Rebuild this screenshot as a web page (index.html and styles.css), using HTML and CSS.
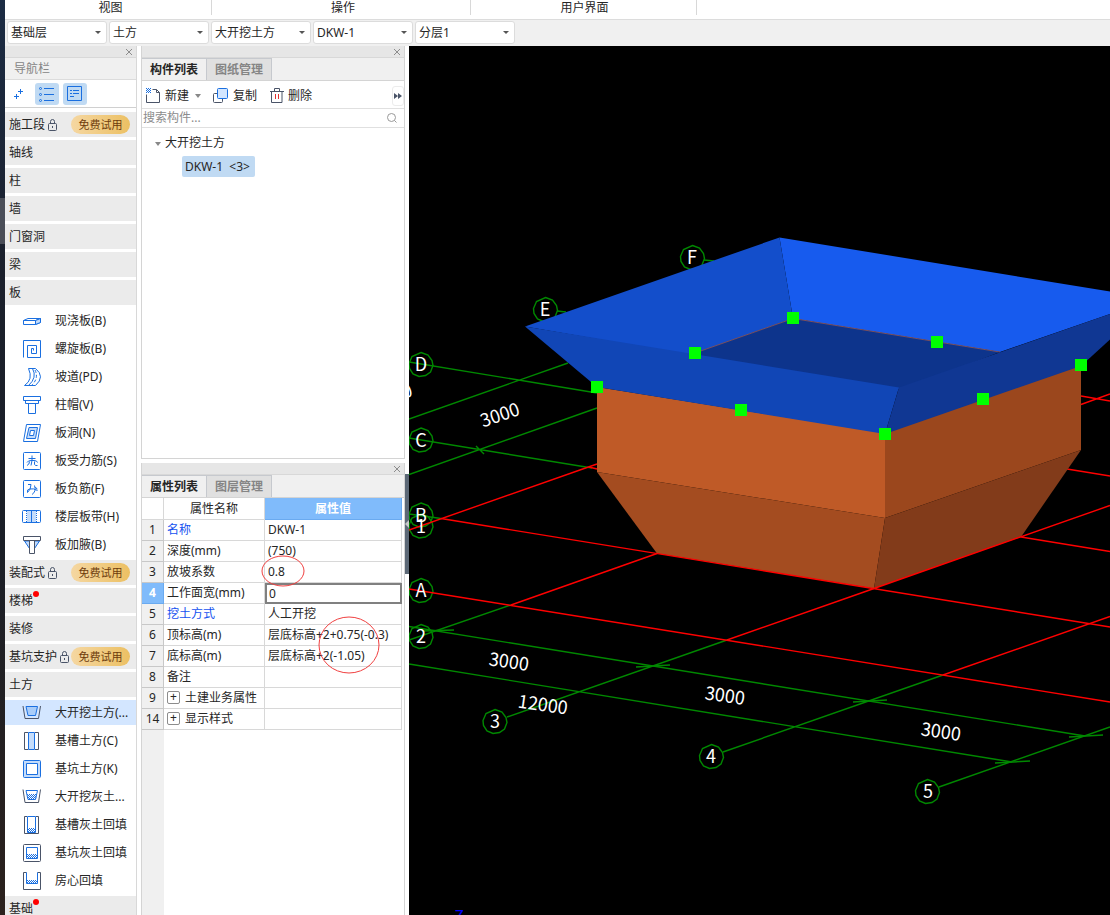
FILE: index.html
```html
<!DOCTYPE html>
<html lang="zh-CN">
<head>
<meta charset="utf-8">
<title>土方建模</title>
<link rel="stylesheet" href="styles.css">
</head>
<body>
<svg class="defs" aria-hidden="true">
  <defs>
    <symbol id="lock" viewBox="0 0 12 14"><rect x="1.500" y="5.500" width="8" height="7" rx="1"/><path d="M3.500 5V3.500a2 2 0 0 1 4 0V5M5.500 8v2"/></symbol>
    <symbol id="close" viewBox="0 0 8 8"><path d="M1 1l6 6M7 1L1 7"/></symbol>
    <pattern id="dots" width="2" height="2" patternUnits="userSpaceOnUse"><path d="M0 0h1v1H0zM1 1h1v1H1z" fill="#1a6fe0" stroke="none"/></pattern>
    <path id="bubble" d="M0-12L7-9.500 11-4 12 1 9.500 7.500 4.500 11-2 12-8 9.500-11.500 4-12-1-9-8z"/>
  </defs>
</svg>
<div class="app">
  <div class="desktop-edge"><span></span></div>
  <div class="window">
    <header class="ribbon">
      <span class="ribbon-view">视图</span><span class="ribbon-operate">操作</span><span class="ribbon-ui">用户界面</span>
    </header>
    <div class="selectors">
      <label class="picker"><select aria-label="楼层"><option>基础层</option></select></label>
      <label class="picker"><select aria-label="类别"><option>土方</option></select></label>
      <label class="picker"><select aria-label="类型"><option>大开挖土方</option></select></label>
      <label class="picker"><select aria-label="构件"><option>DKW-1</option></select></label>
      <label class="picker"><select aria-label="分层"><option>分层1</option></select></label>
    </div>
    <div class="workspace">
      <nav class="navigator">
        <div class="titlebar"><button aria-label="关闭导航栏"><svg class="close"><use href="#close"/></svg></button></div>
        <h2>导航栏</h2>
        <div class="nav-tools">
          <button aria-label="添加"><svg class="blue" viewBox="0 0 24 22"><path d="M13.500 6v5M11 8.500h5M9.500 11v5M7 13.500h5"/></svg></button>
          <button class="on" aria-label="列表"><svg class="blue" viewBox="0 0 24 22"><path d="M9 5.500h10M9 11.500h10M9 17.500h10"/><circle cx="5.500" cy="5.500" r="1"/><circle cx="5.500" cy="11.500" r="1"/><circle cx="5.500" cy="17.500" r="1"/></svg></button>
          <button class="on" aria-label="详情"><svg class="blue" viewBox="0 0 24 22"><path d="M4.500 3.500h14v14h-14zM7 7.500h2M10 7.500h6M7 10.500h2M10 10.500h6M7 13.500h4"/></svg></button>
        </div>
        <ul class="nav-list">
          <li class="group">施工段<svg class="lock"><use href="#lock"/></svg><button class="trial">免费试用</button></li>
          <li class="group">轴线</li>
          <li class="group">柱</li>
          <li class="group">墙</li>
          <li class="group">门窗洞</li>
          <li class="group">梁</li>
          <li class="group">板</li>
          <li class="item"><svg class="blue" viewBox="0 0 20 20"><path d="M1.500 9.500L6 7.500h12.500L13.500 9.500zM1.500 9.500v4h12v-4M13.500 13.500l5-2v-4"/><path fill="#c4dcfb" d="M13.500 9.500v4l5-2v-4z"/></svg>现浇板(B)</li>
          <li class="item"><svg class="blue" viewBox="0 0 20 20"><path d="M1.500 18.500v-17h17v17h-13v-12h9v8h-5v-5h2v2"/></svg>螺旋板(B)</li>
          <li class="item"><svg class="blue" viewBox="0 0 20 20"><path fill="#fff" d="M6.500 1.500h7q10 8 0 17H2.500q9-6 4-17z"/><path d="M10.500 1.500q5 9-4 17"/><path stroke-dasharray="3 2" d="M13 3q4 8-3 15"/></svg>坡道(PD)</li>
          <li class="item"><svg class="blue" viewBox="0 0 20 20"><path d="M1.500 1.500h17v4h-17zM3.500 5.500h13v3h-13zM6.500 8.500h7v10h-7z"/></svg>柱帽(V)</li>
          <li class="item"><svg class="blue" viewBox="0 0 20 20"><path d="M4.500 1.500h14l-3 17h-14z"/><path fill="#c4dcfb" d="M7 4.500h8.500l-2 11H4.500z"/><path fill="#fff" d="M8.500 7.500h4l-1 5h-4z"/></svg>板洞(N)</li>
          <li class="item"><svg class="blue" viewBox="0 0 20 20"><rect x="1.500" y="1.500" width="17" height="17" rx="1"/><path d="M6.500 7.500h7M10 4.500v5l-1 5M5 11.500q1-2 4-2h3q3 0 3.500 2M7.500 10.500q0 3-2.500 4M12.500 10.500v3q1 1.500 3 1"/></svg>板受力筋(S)</li>
          <li class="item"><svg class="blue" viewBox="0 0 20 20"><rect x="1.500" y="1.500" width="17" height="17" rx="1"/><path d="M6 5.500h3q0 5-3.500 8-1-3 2-3.500 4-1 8 1.500M12.500 6.500q2 6-2.500 9M13 8.500q2 0 2 2"/></svg>板负筋(F)</li>
          <li class="item"><svg class="blue" viewBox="0 0 20 20"><rect x=".5" y="3.500" width="18" height="12" rx="1"/><path fill="#c4dcfb" stroke="none" d="M5 4h9v11H5z"/><path d="M9.500 3.500v12"/><path stroke-dasharray="1 1" d="M4.500 4v12M14.500 4v12"/></svg>楼层板带(H)</li>
          <li class="item"><svg class="blue" viewBox="0 0 20 20"><path fill="#c4dcfb" d="M2.500 6h5v7.500zM17.500 6h-5v7.500z"/><path class="slate" fill="#fff" d="M1.500 1.500h17v4h-17zM7.500 5.500h5v13h-5z"/></svg>板加腋(B)</li>
          <li class="group">装配式<svg class="lock"><use href="#lock"/></svg><button class="trial">免费试用</button></li>
          <li class="group"><span class="dotted">楼梯</span></li>
          <li class="group">装修</li>
          <li class="group">基坑支护<svg class="lock"><use href="#lock"/></svg><button class="trial">免费试用</button></li>
          <li class="group">土方</li>
          <li class="item selected"><svg class="blue" viewBox="0 0 20 20"><path class="slate" d="M1 3l2 12.500h13.500L18.500 3"/><path fill="#a9cdf9" d="M4 3.500h11.500l-2 9H6z"/></svg>大开挖土方(...</li>
          <li class="item"><svg class="blue" viewBox="0 0 20 20"><path class="slate" d="M6 1.500H2.500v17H6M13 1.500h3.500v17H13"/><path fill="#c4dcfb" d="M6.500 1.500h6v17h-6z"/></svg>基槽土方(C)</li>
          <li class="item"><svg class="blue" viewBox="0 0 20 20"><rect x="1.500" y="1.500" width="17" height="17" rx="1" fill="#c4dcfb"/><path fill="#fff" d="M4.500 4.500h11v11h-11z"/></svg>基坑土方(K)</li>
          <li class="item"><svg class="blue" viewBox="0 0 20 20"><path class="slate" d="M1 2.500l2 13h13.500l2-13"/><path d="M4 3.500h11.500l-2 9H6z"/><path class="dots" d="M5 7h10l-1 5H6z"/></svg>大开挖灰土...</li>
          <li class="item"><svg class="blue" viewBox="0 0 20 20"><path class="slate" d="M5 1.500H2.500v17h14v-17H14"/><path d="M5.500 1.500v16h8v-16z"/><path class="dots" d="M6 13h7v4H6z"/></svg>基槽灰土回填</li>
          <li class="item"><svg class="blue" viewBox="0 0 20 20"><rect class="slate" x="1.500" y="1.500" width="17" height="17" rx="1"/><path d="M4.500 4.500h11v11h-11z"/><path class="dots" d="M5 11h10v4H5z"/></svg>基坑灰土回填</li>
          <li class="item"><svg class="blue" viewBox="0 0 20 20"><path class="slate" d="M4.500 1.500h-3v17h17v-17h-3"/><path d="M4.500 1.500v11h11v-11"/><path class="dots" d="M5 9h10v3H5z"/></svg>房心回填</li>
          <li class="group"><span class="dotted">基础</span></li>
        </ul>
      </nav>
      <div class="side">
        <section class="panel components">
          <div class="titlebar"><button aria-label="关闭构件列表"><svg class="close"><use href="#close"/></svg></button></div>
          <div class="tabs"><button class="active">构件列表</button><button>图纸管理</button></div>
          <div class="toolbar">
            <button class="new"><svg viewBox="0 0 18 18"><path d="M7.500 2.500h4l3 3v10h-13V7.500M11.500 2.500v3h3"/><path class="dots" d="M1 1h5v5H1z"/></svg>新建<i class="caret"></i></button>
            <button class="copy"><svg viewBox="0 0 18 18"><rect x="1.500" y="6.500" width="9" height="9" rx="1"/><rect x="5.500" y="1.500" width="10" height="10" rx="1" fill="#d3e6ff" stroke="#1a6fe0"/></svg>复制</button>
            <button><svg viewBox="0 0 18 18"><path d="M2 4.500h14M6.500 4V1.500h5V4M3.500 4.500v11h10.500v-11"/><path d="M7.500 7v5M10.500 7v5" stroke="#e03030"/></svg>删除</button>
            <button class="more" aria-label="更多"><svg viewBox="0 0 8 6"><path d="M0 0l4 3-4 3zM4 0l4 3-4 3z"/></svg></button>
          </div>
          <label class="search"><input type="text" aria-label="搜索构件" placeholder="搜索构件..."><svg viewBox="0 0 12 12"><circle cx="5.500" cy="5.500" r="4"/><path d="M8.500 8.500l2 2"/></svg></label>
          <ul class="tree"><li><i class="caret"></i>大开挖土方<ul><li><span>DKW-1&nbsp; &lt;3&gt;</span></li></ul></li></ul>
        </section>
        <section class="panel properties">
          <div class="titlebar"><button aria-label="关闭属性列表"><svg class="close"><use href="#close"/></svg></button></div>
          <div class="tabs"><button class="active">属性列表</button><button>图层管理</button></div>
          <div class="sheet">
            <table>
              <colgroup><col class="c-num"><col class="c-name"><col></colgroup>
              <thead><tr><th></th><th>属性名称</th><th class="current">属性值</th></tr></thead>
              <tbody>
                <tr><th>1</th><td class="key">名称</td><td>DKW-1</td></tr>
                <tr><th>2</th><td>深度(mm)</td><td>(750)</td></tr>
                <tr><th>3</th><td>放坡系数</td><td>0.8</td></tr>
                <tr><th class="current">4</th><td>工作面宽(mm)</td><td class="edit"><input type="text" aria-label="工作面宽(mm)" value="0"></td></tr>
                <tr><th>5</th><td class="key">挖土方式</td><td>人工开挖</td></tr>
                <tr><th>6</th><td>顶标高(m)</td><td>层底标高+2+0.75(-0.3)</td></tr>
                <tr><th>7</th><td>底标高(m)</td><td>层底标高+2(-1.05)</td></tr>
                <tr><th>8</th><td>备注</td><td></td></tr>
                <tr><th>9</th><td><button class="expand" aria-label="展开土建业务属性">+</button>土建业务属性</td><td></td></tr>
                <tr><th>14</th><td><button class="expand" aria-label="展开显示样式">+</button>显示样式</td><td></td></tr>
              </tbody>
            </table>
            <svg class="marks" viewBox="0 0 262 232"><ellipse cx="141" cy="73" rx="21" ry="15"/><ellipse cx="207" cy="147" rx="30" ry="28"/></svg>
          </div>
        </section>
      </div>
      <div class="splitter"><button aria-label="收起面板"><svg viewBox="0 0 4 8"><path d="M4 0v8L0 4z"/></svg></button></div>
      <main class="canvas">
        <svg viewBox="409 46 701 869" preserveAspectRatio="xMinYMin slice">
          <g class="axis">
            <path d="M409 362L597 393M409 438L592 468M409 419L568 363M409 474.500L597 408M476 446l8 8M409 514L441 518.500M704 260l10 1M557 311l9 1"/>
            <path d="M409 640L511 605M507 717L727 640M723 752L943 675M939 787L1110 727M409 626.500L1085 736M409 664L1012 762"/>
            <path d="M422 631L454 630M636 667L670 665M853 702L887 700M1069 737L1103 735M995 763L1030 761"/>
            <use href="#bubble" x="692.500" y="257.500"/><use href="#bubble" x="545.500" y="309.500"/><use href="#bubble" x="421" y="364.500"/><use href="#bubble" x="421" y="440"/><use href="#bubble" x="421" y="515"/><use href="#bubble" x="421" y="526"/><use href="#bubble" x="421" y="590.500"/><use href="#bubble" x="421" y="636.500"/><use href="#bubble" x="495" y="721.500"/><use href="#bubble" x="711.500" y="756.500"/><use href="#bubble" x="927.500" y="791.500"/>
          </g>
          <path class="grid" d="M409 530L597 464M589 467l8 2M409 589L1110 702M511 605L657 553.500M727 640L874 588.500M943 675L1110 616.500M1081 396L1110 401M1081 404.500L1110 394M1067 469L1110 476"/>
          <g class="labels">
            <text x="692" y="264">F</text><text x="545" y="316">E</text><text x="421" y="371">D</text><text x="421" y="447">C</text><text x="421" y="522">B</text><text x="421" y="533">1</text><text x="421" y="597">A</text><text x="421" y="643">2</text><text x="495" y="728">3</text><text x="711" y="763">4</text><text x="928" y="798">5</text>
            <text transform="translate(502 421) rotate(-19)">3000</text><text transform="translate(409 397) rotate(-19)">0</text>
            <text transform="translate(508 668) rotate(8)">3000</text><text transform="translate(542 711) rotate(8)">12000</text><text transform="translate(724 702) rotate(8)">3000</text><text transform="translate(940 738) rotate(8)">3000</text>
            <text class="z" x="459" y="922">Z</text>
          </g>
          <g class="pit">
            <path fill="#bf5a27" d="M597 387L885 433V518L597 472z"/>
            <path fill="#a44c20" d="M597 472L885 518 874 588.500 657 553.500z"/>
            <path fill="#9b471d" d="M885 433L1081 365V450L885 518z"/>
            <path fill="#823b1a" d="M885 518L1081 450 1021 537 874 588.500z"/>
            <path fill="#175bee" d="M779.500 237.500L1110 291.500V314L1000 352 793 318.500z"/>
            <path fill="#134ecb" d="M525 326.500L779.500 237.500 793 318.500 695 353.500V356z"/>
            <path fill="#0d348c" d="M695 353L793 318.500 1000 352 902 390 695 357z"/>
            <path fill="#1146b6" d="M525 326.500L899 387.500 885 434 597 387z"/>
            <path fill="#103793" d="M899 387.500L1110 314V339.500L1081 366 885 434z"/>
            <path class="rim" d="M695 353L793 318.500 1000 352"/>
          </g>
          <path class="grid" d="M441 518.500L1110 627M874 588.500L1110 505.500M1021 537L1110 551.500"/>
          <path class="grips" d="M787 312h12v12h-12zM689 347h12v12h-12zM931 336h12v12h-12zM591 381h12v12h-12zM735 404h12v12h-12zM879 428h12v12h-12zM977 393h12v12h-12zM1075 359h12v12h-12z"/>
        </svg>
      </main>
    </div>
  </div>
</div>
</body>
</html>
```
FILE: styles.css
```css
* { box-sizing: border-box; }
body {
  margin: 0;
  font: 12px/20px "Noto Sans", "Noto Sans CJK SC", sans-serif;
  color: #262626;
}
button, input, select { font: inherit; color: inherit; border: 0; padding: 0; margin: 0; background: none; }
ul { list-style: none; margin: 0; padding: 0; }
svg { fill: none; stroke: #4a5468; flex: none; }
.defs { position: absolute; width: 0; height: 0; }
.dots { fill: url(#dots); stroke: none; }
.blue { stroke: #1a6fe0; }
.slate { stroke: #4a5468; }

.app { display: flex; height: 100vh; overflow: hidden; background: #fff; }
.desktop-edge { width: 5px; flex: none; padding-top: 198px; background: linear-gradient(#1c2c44, #1b202c 30%, #1b1f27 60%, #2b211d); }
.desktop-edge span { display: block; height: 46px; background: #4a4e58; }
.window { flex: 1; min-width: 0; display: flex; flex-direction: column; }

.ribbon { display: flex; height: 20px; flex: none; border-bottom: 1px solid #dcdcdc; line-height: 16px; text-align: center; }
.ribbon span { height: 15px; border-right: 1px solid #d8d8d8; }
.ribbon-view { width: 207px; padding-left: 5px; }
.ribbon-operate { width: 259px; padding-left: 4px; }
.ribbon-ui { width: 226px; padding-left: 2px; }

.selectors { display: flex; flex: none; gap: 2px; height: 26px; padding: 1px 2px; background: #f0f0f0; }
.picker { position: relative; width: 100px; height: 23px; }
.picker select { appearance: none; width: 100%; height: 100%; padding: 0 16px 0 3px; border: 1px solid #dcdcdc; border-radius: 3px; background: #fff; }
.picker::after, .caret { content: ""; border: 3px solid transparent; border-top-color: #555; border-bottom: 0; }
.picker::after { position: absolute; right: 6px; top: 10px; pointer-events: none; }
.caret { display: inline-block; border-top: 4px solid #888; }

.workspace { flex: 1; min-height: 0; display: flex; }
.titlebar { height: 12px; flex: none; display: flex; justify-content: flex-end; align-items: center; padding-right: 3px; background: #e6e6e6; border-bottom: 1px solid #d8d8d8; }
.titlebar button { display: flex; }
.close { width: 8px; height: 8px; stroke: #8c8c8c; }

.navigator { width: 132px; flex: none; border-right: 1px solid #d8d8d8; overflow: hidden; }
.navigator h2 { margin: 0; height: 22px; padding-left: 9px; font-size: 12px; font-weight: 400; line-height: 22px; color: #858585; background: #f0f0f0; border-bottom: 1px solid #dcdcdc; }
.nav-tools { display: flex; gap: 4px; height: 28px; padding: 3px 2px; border-bottom: 1px solid #d0d0d0; }
.nav-tools button { width: 24px; height: 22px; border-radius: 3px; }
.nav-tools svg { width: 24px; height: 22px; display: block; }
.nav-tools .on { background: #c0daf3; }
.nav-list { display: grid; gap: 3px; padding-top: 4px; }
.nav-list li { height: 25px; display: flex; align-items: center; white-space: nowrap; }
.group { background: #ebebeb; padding: 0 6px 0 4px; }
.item { gap: 13px; padding-left: 17px; }
.item svg { width: 20px; height: 20px; }
.selected { background: #d3e6ff; }
.lock { width: 12px; height: 14px; margin-left: 2px; }
.trial { margin-left: auto; width: 59px; height: 19px; border-radius: 10px; font-size: 11px; line-height: 19px; color: #6e3c0c; background: linear-gradient(90deg, #f5d7a2, #ecc063); text-align: center; }
.dotted { position: relative; }
.dotted::after { content: ""; position: absolute; right: -6px; top: 0; width: 6px; height: 6px; border-radius: 50%; background: #f00; }

.side { width: 264px; margin-left: 4px; flex: none; display: flex; flex-direction: column; gap: 4px; }
.panel { border: 1px solid #d4d4d4; border-top: 0; background: #fff; overflow: hidden; }
.components { flex: 0 0 413px; }
.properties { flex: 1; min-height: 0; border-bottom: 0; display: flex; flex-direction: column; }
.tabs { display: flex; flex: none; height: 23px; background: #f0f0f0; border-bottom: 1px solid #d4d4d4; }
.tabs button { width: 65px; font-weight: 700; color: #858585; background: #e0e0e0; border: 1px solid #c6c9ce; border-width: 1px 1px 0 0; }
.tabs .active { color: #262626; background: #f0f0f0; }
.toolbar { display: flex; align-items: center; height: 28px; padding: 2px 0 0 3px; border-bottom: 1px solid #e0e0e0; }
.toolbar button { display: flex; align-items: center; gap: 2px; }
.toolbar svg { width: 18px; height: 18px; }
.toolbar .new { width: 67px; gap: 2px; }
.new .caret { margin-left: 4px; }
.toolbar .copy { width: 56px; gap: 3px; }
.toolbar .more { margin-left: auto; width: 12px; height: 20px; justify-content: center; border: 1px solid #ececec; border-radius: 3px; }
.toolbar .more svg { width: 8px; height: 6px; fill: #4a5468; stroke: none; }
.search { display: flex; align-items: center; height: 19px; padding: 0 6px 0 1px; border-bottom: 1px solid #e0e0e0; }
.search input { flex: 1; min-width: 0; outline: 0; }
.search input::placeholder { color: #8c8c8c; opacity: 1; }
.search svg { width: 12px; height: 12px; stroke: #999; }
.tree { padding: 4px 0 0 13px; line-height: 22px; }
.tree .caret { margin-right: 4px; vertical-align: middle; }
.tree ul { padding: 2px 0 0 27px; }
.tree span { display: inline-block; line-height: 21px; padding: 0 5px 0 3px; border-radius: 2px; background: #c0daf3; }

.sheet { position: relative; flex: 1; min-height: 0; background: linear-gradient(90deg, #f0f0f0 22px, #fff 22px); }
.sheet table { width: calc(100% - 2px); border-collapse: separate; border-spacing: 0; table-layout: fixed; }
.c-num { width: 22px; }
.c-name { width: 101px; }
.sheet th, .sheet td { height: 21px; padding: 0; border: 1px solid #d8d8d8; border-width: 0 1px 1px 0; font-weight: 400; line-height: 20px; text-align: left; white-space: nowrap; }
.sheet td { padding-left: 3px; background: #fff; }
.sheet tbody th { text-align: center; background: #f0f0f0; border-color: #c8c8c8; }
.sheet thead th { height: 21px; padding-top: 1px; text-align: center; background: #fff; }
.sheet th.current { color: #fff; font-weight: 700; background: #80bbfb; border-color: #6aaaf0; }
.sheet .key { color: #1452f0; }
.sheet td.edit { padding: 0; border: 0; }
.edit input { display: block; width: 100%; height: 21px; padding-left: 2px; border: 2px solid #808080; outline: 0; }
.expand { width: 13px; height: 13px; margin: 0 5px 0 0; border: 1px solid #8c8c8c; border-radius: 2px; line-height: 10px; vertical-align: 1px; }
.marks { position: absolute; left: 0; top: 0; width: 262px; height: 232px; stroke: #f04040; pointer-events: none; }

.splitter { width: 4px; flex: none; padding-top: 428px; background: #fff; }
.splitter button { display: flex; align-items: center; width: 4px; height: 100px; background: #5c6876; }
.splitter svg { width: 4px; height: 8px; fill: #c8c8c8; stroke: none; }
.canvas { flex: 1; min-width: 0; background: #000; overflow: hidden; }
.canvas svg { display: block; width: 100%; height: 100%; }
.axis { stroke: #008800; stroke-width: 1.4; }
.grid { stroke: #f00; stroke-width: 1.4; }
.pit { stroke: none; }
.rim { stroke: #7a5060; }
.grips { fill: #0f0; stroke: none; }
.labels { font: 18px "Noto Sans CJK SC", sans-serif; fill: #fff; stroke: none; text-anchor: middle; }
.labels .z { fill: #00f; font-size: 16px; }
```
